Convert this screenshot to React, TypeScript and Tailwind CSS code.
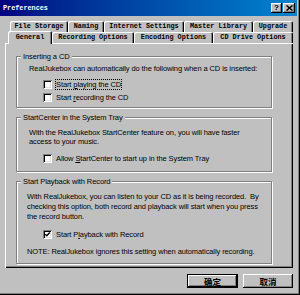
import React from "react";

const SANS = "font-['Liberation_Sans',Arial,sans-serif]";
const MONO = "font-['Liberation_Mono','Courier_New',monospace]";

function Tab({ label, w, selected }: { label: string; w: string; selected?: boolean }) {
  return (
    <div
      className={`${w} ${
        selected ? "h-[13px] -mb-[1px] relative z-10 bg-[#c0c0c0]" : "h-[11px]"
      } flex items-center justify-center rounded-t-[2px] shadow-[inset_1px_1px_0_#fff,inset_-1px_0_0_#000,inset_-2px_0_0_#808080] ${MONO} text-[6.8px] font-bold leading-[11px] text-black whitespace-nowrap tracking-normal`}
    >
      {label}
    </div>
  );
}

function Check({ checked }: { checked?: boolean }) {
  return (
    <div className="w-[9px] h-[9px] bg-white shadow-[inset_1px_1px_0_#808080,inset_-1px_-1px_0_#fff,inset_2px_2px_0_#000,inset_-2px_-2px_0_#dfdfdf] flex items-center justify-center shrink-0">
      {checked && (
        <svg width="9" height="9" viewBox="0 0 9 9">
          <path d="M2.3 4.2 L3.8 5.8 L6.8 2.6" stroke="#000" strokeWidth="1.4" fill="none" />
        </svg>
      )}
    </div>
  );
}

function CheckRow({
  children,
  checked,
  focused,
  ml,
  mt,
}: {
  children: React.ReactNode;
  checked?: boolean;
  focused?: boolean;
  ml: string;
  mt: string;
}) {
  return (
    <div className={`flex items-center h-[10px] ${ml} ${mt}`}>
      <Check checked={checked} />
      <span
        className={`ml-[3px] border ${
          focused ? "border-dotted border-black" : "border-transparent"
        } h-[11px] leading-[9px] whitespace-nowrap`}
      >
        {children}
      </span>
    </div>
  );
}

function Group({
  title,
  h,
  mt,
  children,
}: {
  title: string;
  h: string;
  mt: string;
  children: React.ReactNode;
}) {
  return (
    <div
      className={`relative ${mt} ${h} w-[256px] border border-[#808080] shadow-[inset_1px_1px_0_#fff,1px_1px_0_#fff]`}
    >
      <span className="absolute left-[4px] top-[-5px] bg-[#c0c0c0] px-[2px] leading-[9px] whitespace-nowrap">
        {title}
      </span>
      {children}
    </div>
  );
}

export default function App() {
  return (
    <div
      className={`w-[300px] h-[295px] bg-[#c0c0c0] overflow-hidden flex flex-col shadow-[inset_-1px_-1px_0_#000,inset_-2px_-2px_0_#808080] ${SANS} text-[7.5px] tracking-[-0.1px] text-black`}
    >
      {/* Title bar */}
      <div className="h-[16px] mr-[3px] flex items-center bg-linear-to-r from-[#000080] to-[#1084d0] pl-[3px] pr-[2px] shrink-0">
        <span className={`${MONO} text-[6.8px] font-bold text-white tracking-normal`}>Preferences</span>
        <div className="ml-auto flex gap-[1px]">
          <div className="w-[11px] h-[10px] bg-[#c0c0c0] shadow-[inset_-1px_-1px_0_#000,inset_1px_1px_0_#fff,inset_-2px_-2px_0_#808080] flex items-center justify-center">
            <span className={`${MONO} text-[8px] font-bold leading-[8px] tracking-normal`}>?</span>
          </div>
          <div className="w-[12px] h-[10px] bg-[#c0c0c0] shadow-[inset_-1px_-1px_0_#000,inset_1px_1px_0_#fff,inset_-2px_-2px_0_#808080] flex items-center justify-center">
            <svg width="7" height="6" viewBox="0 0 7 6">
              <path d="M0.5 0.5 L6.5 5.5 M6.5 0.5 L0.5 5.5" stroke="#000" strokeWidth="1.5" />
            </svg>
          </div>
        </div>
      </div>

      {/* Tabs */}
      <div className="mt-[5px] h-[11px] flex pl-[10px] shrink-0">
        <Tab label="File Storage" w="w-[58px]" />
        <Tab label="Naming" w="w-[36px]" />
        <Tab label="Internet Settings" w="w-[80px]" />
        <Tab label="Master Library" w="w-[69px]" />
        <Tab label="Upgrade" w="w-[40px]" />
      </div>
      <div className="h-[11px] flex items-end pl-[8px] shrink-0">
        <Tab label="General" w="w-[44px]" selected />
        <Tab label="Recording Options" w="w-[82px]" />
        <Tab label="Encoding Options" w="w-[79px]" />
        <Tab label="CD Drive Options" w="w-[80px]" />
      </div>

      {/* Panel */}
      <div className="ml-[5px] w-[288px] h-[225px] shrink-0 flex flex-col pl-[11px] shadow-[inset_1px_1px_0_#fff,inset_-1px_-1px_0_#000,inset_-2px_-2px_0_#808080]">
        <Group title="Inserting a CD" h="h-[52px]" mt="mt-[13px]">
          <div className="pl-[12px] pt-[7px]">
            <div className="h-[10px] leading-[10px] whitespace-nowrap">
              RealJukebox can automatically do the following when a CD is inserted:
            </div>
            <CheckRow ml="ml-[14px]" mt="mt-[5px]" focused>
              Start <span className="underline">p</span>laying the CD
            </CheckRow>
            <CheckRow ml="ml-[14px]" mt="mt-[3px]">
              Start <span className="underline">r</span>ecording the CD
            </CheckRow>
          </div>
        </Group>

        <Group title="StartCenter in the System Tray" h="h-[55px]" mt="mt-[9px]">
          <div className="pl-[12px] pt-[10px]">
            <div className="leading-[9px] whitespace-nowrap">
              With the RealJukebox StartCenter feature on, you will have faster
              <br />
              access to your music.
            </div>
            <CheckRow ml="ml-[14px]" mt="mt-[7px]">
              Allow <span className="underline">S</span>tartCenter to start up in the System Tray
            </CheckRow>
          </div>
        </Group>

        <Group title="Start Playback with Record" h="h-[83px]" mt="mt-[9px]">
          <div className="pl-[10px] pt-[10px]">
            <div className="leading-[10px] whitespace-nowrap">
              With RealJukebox, you can listen to your CD as it is being recorded.&nbsp; By
              <br />
              checking this option, both record and playback will start when you press
              <br />
              the record button.
            </div>
            <CheckRow ml="ml-[16px]" mt="mt-[7px]" checked>
              Start P<span className="underline">l</span>ayback with Record
            </CheckRow>
            <div className="mt-[8px] h-[10px] leading-[10px] whitespace-nowrap">
              NOTE: RealJukebox ignores this setting when automatically recording.
            </div>
          </div>
        </Group>
      </div>

      {/* Buttons */}
      <div className="mt-[6px] flex justify-end gap-[5px] pr-[7px] shrink-0">
        <div className="w-[51px] h-[14px] border border-black bg-[#c0c0c0] shadow-[inset_-1px_-1px_0_#000,inset_1px_1px_0_#fff,inset_-2px_-2px_0_#808080] flex items-center justify-center">
          <span className="font-['Noto_Sans_CJK_SC',sans-serif] text-[8.5px] font-bold leading-[10px] tracking-normal">
            确定
          </span>
        </div>
        <div className="w-[50px] h-[14px] bg-[#c0c0c0] shadow-[inset_-1px_-1px_0_#000,inset_1px_1px_0_#fff,inset_-2px_-2px_0_#808080] flex items-center justify-center">
          <span className="font-['Noto_Sans_CJK_SC',sans-serif] text-[8.5px] font-bold leading-[10px] tracking-normal">
            取消
          </span>
        </div>
      </div>
    </div>
  );
}
